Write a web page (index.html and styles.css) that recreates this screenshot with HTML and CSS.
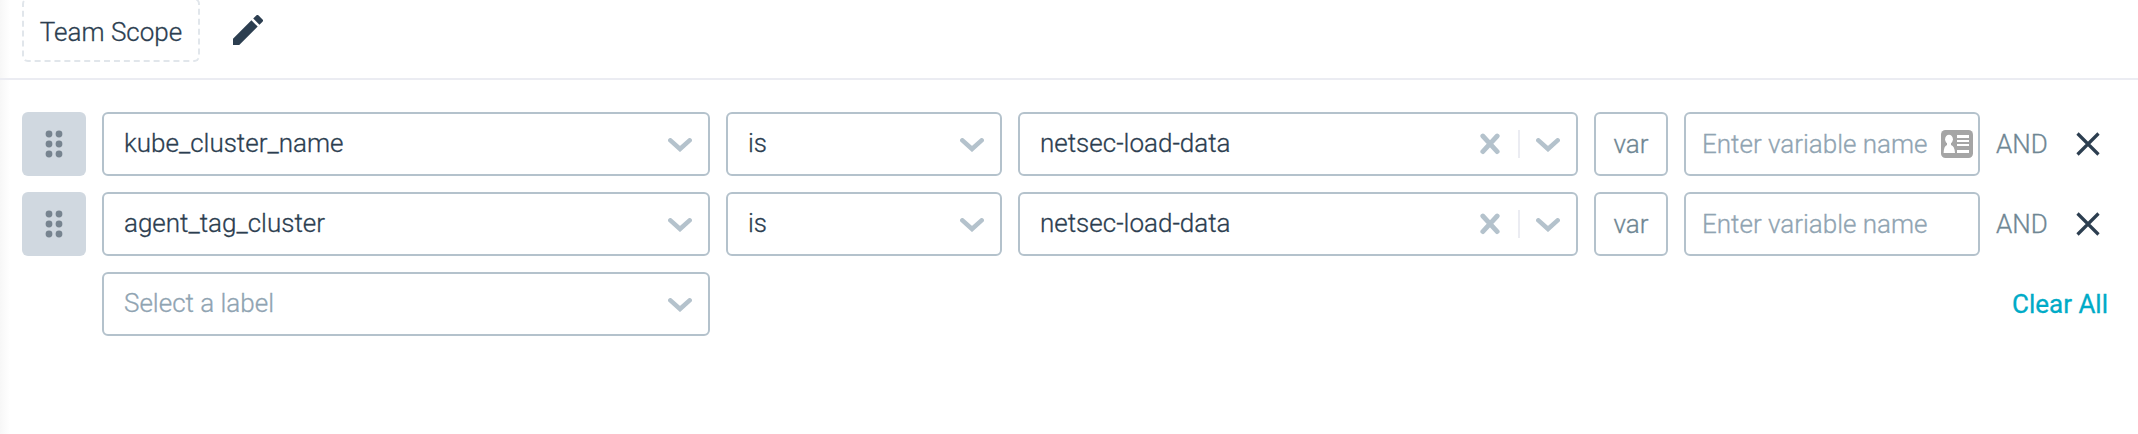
FILE: index.html
```html
<!DOCTYPE html>
<html lang="en">
<head>
    <meta charset="UTF-8">
    <meta name="viewport" content="width=device-width, initial-scale=1.0">
    <title>Team Scope</title>
    <link rel="stylesheet" href="styles.css">
</head>
<body>
    <svg class="sprite" width="0" height="0">
        <symbol id="chevron" viewBox="0 0 24 14">
            <path d="M2.4 2.4 L12 11 L21.6 2.4" fill="none" stroke="currentColor" stroke-width="4.6" stroke-linecap="round"/>
        </symbol>
        <symbol id="clear" viewBox="0 0 20 22">
            <path d="M2.8 3 L17.2 18.6 M17.2 3 L2.8 18.6" fill="none" stroke="currentColor" stroke-width="4.8" stroke-linecap="round"/>
        </symbol>
        <symbol id="remove" viewBox="0 0 24 24">
            <path d="M1.5 1.5 L22.5 22.5 M22.5 1.5 L1.5 22.5" fill="none" stroke="currentColor" stroke-width="3.2"/>
        </symbol>
        <symbol id="grip" viewBox="0 0 18 28">
            <g fill="currentColor">
                <circle cx="4" cy="4" r="3.4"/><circle cx="14" cy="4" r="3.4"/>
                <circle cx="4" cy="14" r="3.4"/><circle cx="14" cy="14" r="3.4"/>
                <circle cx="4" cy="24" r="3.4"/><circle cx="14" cy="24" r="3.4"/>
            </g>
        </symbol>
    </svg>

    <div class="header">
        <div class="scope">Team Scope</div>
        <svg class="edit" viewBox="3 3 18 18">
            <path fill="currentColor" d="M3 17.25V21h3.75L17.81 9.94l-3.75-3.75L3 17.25zM20.71 7.04a1 1 0 0 0 0-1.41l-2.34-2.34a1 1 0 0 0-1.41 0l-1.83 1.83 3.75 3.75 1.83-1.83z"/>
        </svg>
    </div>

    <div class="filters">
        <div class="row">
            <div class="handle"><svg width="18" height="28"><use href="#grip"/></svg></div>
            <div class="select label">
                <span>kube_cluster_name</span>
                <svg class="chevron"><use href="#chevron"/></svg>
            </div>
            <div class="select operator">
                <span>is</span>
                <svg class="chevron"><use href="#chevron"/></svg>
            </div>
            <div class="select value">
                <span>netsec-load-data</span>
                <svg class="clear"><use href="#clear"/></svg>
                <i class="divider"></i>
                <svg class="chevron"><use href="#chevron"/></svg>
            </div>
            <div class="var">var</div>
            <div class="variable">
                <input type="text" placeholder="Enter variable name">
                <svg class="card" viewBox="0 0 32 28">
                    <rect width="32" height="28" rx="4.5" fill="#a5a5a5"/>
                    <g fill="#fff">
                        <ellipse cx="8" cy="9.3" rx="3.9" ry="4.6"/>
                        <path d="M6 12h4v3c2.5.8 3.8 3.5 4 8H2.6c.2-4.5 1.2-7.2 3.4-8z"/>
                        <rect x="16" y="5" width="12" height="3"/>
                        <rect x="16" y="10" width="12" height="2"/>
                        <rect x="16" y="14" width="12" height="2"/>
                        <rect x="16" y="20" width="12" height="3"/>
                    </g>
                </svg>
            </div>
            <span class="and">AND</span>
            <svg class="remove"><use href="#remove"/></svg>
        </div>

        <div class="row">
            <div class="handle"><svg width="18" height="28"><use href="#grip"/></svg></div>
            <div class="select label">
                <span>agent_tag_cluster</span>
                <svg class="chevron"><use href="#chevron"/></svg>
            </div>
            <div class="select operator">
                <span>is</span>
                <svg class="chevron"><use href="#chevron"/></svg>
            </div>
            <div class="select value">
                <span>netsec-load-data</span>
                <svg class="clear"><use href="#clear"/></svg>
                <i class="divider"></i>
                <svg class="chevron"><use href="#chevron"/></svg>
            </div>
            <div class="var">var</div>
            <div class="variable">
                <input type="text" placeholder="Enter variable name">
            </div>
            <span class="and">AND</span>
            <svg class="remove"><use href="#remove"/></svg>
        </div>

        <div class="row last">
            <div class="select label empty">
                <span>Select a label</span>
                <svg class="chevron"><use href="#chevron"/></svg>
            </div>
            <a class="clear-all">Clear All</a>
        </div>
    </div>
</body>
</html>
```

FILE: styles.css
```css
* {
    box-sizing: border-box;
}
body {
    margin: 0;
    height: 434px;
    overflow: hidden;
    font-family: Roboto, sans-serif;
    font-size: 26px;
    font-weight: 300;
    line-height: 30px;
    color: #2c3e50;
    background: linear-gradient(to right, #f7f7f7, #ffffff 10px);
    -webkit-text-stroke: 0.3px;
}
svg {
    display: block;
    flex: none;
}
.sprite {
    display: none;
}
.header {
    display: flex;
    height: 80px;
    padding-left: 22px;
    border-bottom: 2px solid #ebecf2;
}
.scope {
    width: 178px;
    height: 64px;
    margin-top: -2px;
    padding-top: 17px;
    border: 2px dashed #e1e6eb;
    border-radius: 6px;
    text-align: center;
}
.edit {
    width: 30px;
    height: 30px;
    margin: 15px 0 0 33px;
}
.filters {
    display: flex;
    flex-direction: column;
    gap: 16px;
    padding: 32px 30px 0 22px;
}
.row {
    display: flex;
    align-items: center;
    gap: 16px;
    height: 64px;
}
.handle {
    display: flex;
    align-items: center;
    justify-content: center;
    width: 64px;
    height: 64px;
    border-radius: 6px;
    background-color: #d0d8e0;
    color: #778490;
}
.select, .var, .variable {
    display: flex;
    align-items: center;
    height: 64px;
    border: 2px solid #b4c2cc;
    border-radius: 6px;
    background-color: #ffffff;
}
.select {
    padding: 0 16px 0 20px;
}
.select span {
    flex: 1;
    margin-top: -2px;
}
.label {
    width: 608px;
}
.operator {
    width: 276px;
}
.value {
    width: 560px;
}
.empty span {
    color: #90a4b2;
}
.chevron {
    width: 24px;
    height: 14px;
    margin-top: 2px;
    color: #b4c2cc;
}
.clear {
    width: 20px;
    height: 22px;
    color: #b4c2cc;
}
.divider {
    width: 2px;
    height: 28px;
    margin: 0 16px 0 18px;
    background-color: #ebecf2;
}
.var {
    justify-content: center;
    width: 74px;
    color: #6f8794;
}
.variable {
    width: 296px;
    padding: 0 5px 0 16px;
}
input {
    flex: 1;
    min-width: 0;
    height: 60px;
    padding: 0;
    border: none;
    outline: none;
    background: none;
    font: inherit;
}
input::placeholder {
    color: #90a4b2;
    -webkit-text-stroke: 0.3px;
}
.card {
    width: 32px;
    height: 28px;
}
.and {
    color: #6f8794;
}
.remove {
    width: 24px;
    height: 24px;
    margin: 0 8px 0 auto;
}
.last {
    padding-left: 80px;
}
.clear-all {
    margin-left: auto;
    font-weight: 400;
    color: #00abc7;
}
```
